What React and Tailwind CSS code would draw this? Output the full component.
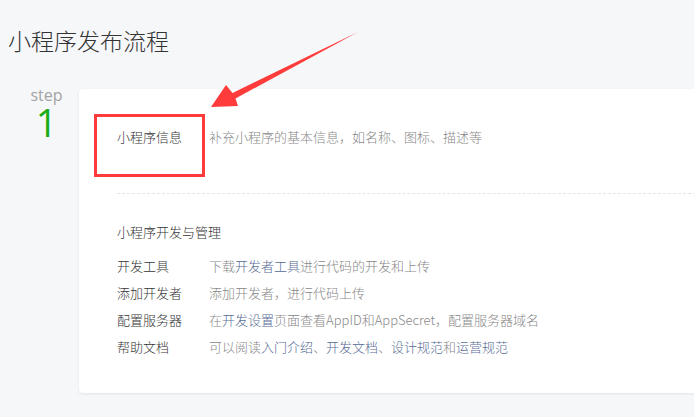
import React from "react";

const cjk = { fontFamily: '"Noto Sans CJK SC", "Noto Sans", sans-serif' };

function Link({ children }) {
  return <span className="text-[#576b95]">{children}</span>;
}

function Row({ label, children }) {
  return (
    <div className="flex text-[13px] leading-[20px]">
      <div className="w-[92px] shrink-0 text-[#353535]">{label}</div>
      <div className="text-[#888888]">{children}</div>
    </div>
  );
}

export default function App() {
  return (
    <div className="relative w-[694px] h-[417px] overflow-hidden bg-[#f6f7f9] font-light" style={cjk}>
      <h1 className="pl-[8px] pt-[25px] text-[23px] leading-[30px] font-light text-[#333333]">
        小程序发布流程
      </h1>
      <div className="mt-[34px] flex items-start">
        <div
          className="w-[79px] shrink-0 flex flex-col items-center -mt-[1px] pl-[14px]"
          style={{ fontFamily: '"Open Sans", sans-serif' }}
        >
          <div className="text-[16px] leading-[14px] text-[#a3a3a3] font-normal">step</div>
          <div className="mt-[5px] text-[38px] leading-[30px] text-[#1aad19] font-normal">1</div>
        </div>
        <div className="relative w-[660px] shrink-0 rounded-[4px] bg-white shadow-[0_1px_3px_rgba(0,0,0,0.08)] px-[38px] pt-[38px] pb-[36px]">
          <div className="pb-[46px] border-b border-dashed border-[#e5e5e5]">
            <Row label="小程序信息">补充小程序的基本信息，如名称、图标、描述等</Row>
          </div>
          <div className="mt-[28px] text-[13px] leading-[20px] text-[#353535]">小程序开发与管理</div>
          <div className="mt-[14px] flex flex-col gap-[7px]">
            <Row label="开发工具">
              下载<Link>开发者工具</Link>进行代码的开发和上传
            </Row>
            <Row label="添加开发者">添加开发者，进行代码上传</Row>
            <Row label="配置服务器">
              在<Link>开发设置</Link>页面查看AppID和AppSecret，配置服务器域名
            </Row>
            <Row label="帮助文档">
              可以阅读<Link>入门介绍</Link>、<Link>开发文档</Link>、<Link>设计规范</Link>和<Link>运营规范</Link>
            </Row>
          </div>
          <div className="absolute left-[15px] top-[25px] w-[111px] h-[63px] border-[3px] border-[#ff3b3b]" />
        </div>
      </div>
      <svg className="absolute left-0 top-0 pointer-events-none" width="694" height="417" viewBox="0 0 694 417">
        <polygon
          points="211,107 226,85 232.5,93 358,32 235.5,98.5 238,106"
          fill="#ff3b3b"
        />
      </svg>
    </div>
  );
}
